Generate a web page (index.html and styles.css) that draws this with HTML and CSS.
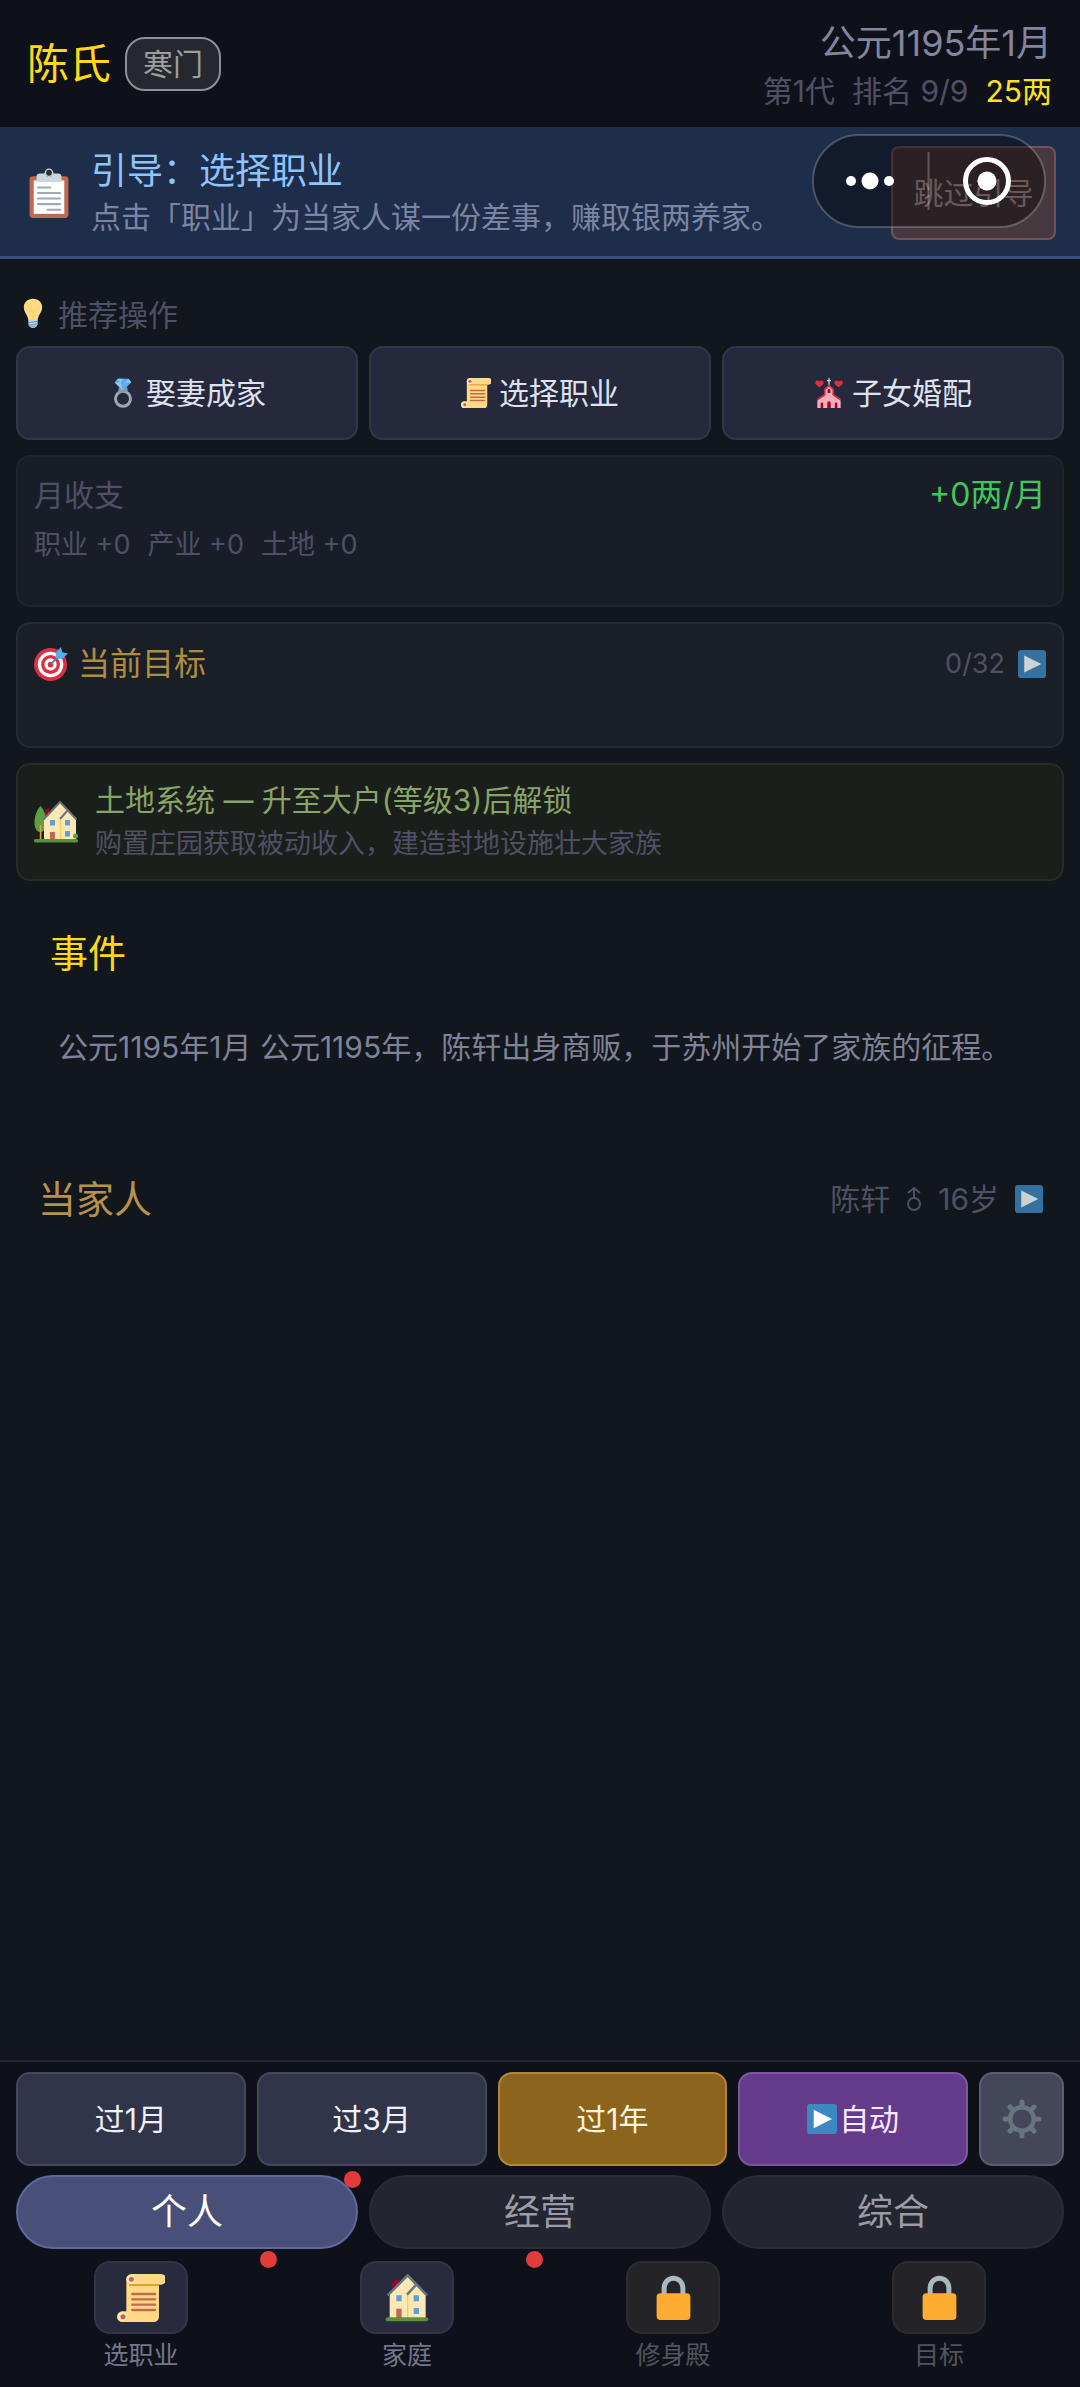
FILE: index.html
```html
<!DOCTYPE html>
<html lang="zh-CN">
<head>
<meta charset="utf-8">
<meta name="viewport" content="width=device-width, initial-scale=1">
<title>陈氏</title>
<link rel="stylesheet" href="styles.css">
</head>
<body>
<svg class="sprite" aria-hidden="true">
  <symbol id="i-clipboard" viewBox="0 0 36 36">
    <rect x="4" y="6" width="28" height="30" rx="2.500" fill="#c1694f"/>
    <rect x="7" y="9" width="22" height="24" fill="#fff"/>
    <path fill="#ccd6dd" d="M9 10V6.500a2.500 2.500 0 0 1 2.500-2.500H14.500a4 4 0 0 1 7 0h3a2.500 2.500 0 0 1 2.500 2.500V10z"/>
    <circle cx="18" cy="3.800" r="2.600" fill="#292f33"/><circle cx="18" cy="3.400" r="2.600" fill="none" stroke="#ccd6dd"/>
    <path stroke="#99aab5" stroke-width="1.500" stroke-linecap="round" d="M10 14h9M10 18h16M10 22h16M10 26h16M17 30h9"/>
  </symbol>
  <symbol id="i-bulb" viewBox="0 0 36 36">
    <path fill="#ffd983" d="M29 11.060C29 5.600 24.800 1 18 1S7 5.600 7 11.060C7 17.500 11.500 19 12.500 27h11C24.500 19 29 17.500 29 11.060z"/>
    <path fill="none" stroke="#ffcc4d" stroke-width="1.300" d="M14 13l4 4 4-4M18 17v9"/>
    <path fill="#ccd6dd" d="M12.500 26h11v5a5.500 5 0 0 1-11 0z"/>
    <path stroke="#5da5dc" stroke-width="1.400" d="M12.500 29.500l11-1.500M12.500 32.500l11-1.500"/>
    <path fill="#99aab5" d="M14 33h8l-2 2.500h-4z"/>
  </symbol>
  <symbol id="i-ring" viewBox="0 0 36 36">
    <circle cx="18" cy="25" r="9" fill="none" stroke="#99aab5" stroke-width="3.600"/>
    <path fill="#8899a6" d="M13 11h10l1 6H12z"/>
    <path fill="#5dadec" d="M11.500 1h13L28 5.500 18 15 8 5.500z"/>
    <path fill="#8ccaf7" d="M8 5.500h7L18 15zM11.500 1l3.500 4.500L18 1zM28 5.500h-7L24.500 1z"/>
  </symbol>
  <symbol id="i-scroll" viewBox="0 0 36 36">
    <path fill="#ffd983" d="M7 4a4 4 0 0 1 4-4h22a3.500 3.500 0 0 1 0 8h-1.500v24a4 4 0 0 1-4 4H4a4 4 0 0 1 0-8h3z"/>
    <path fill="#e39f3d" d="M9 7.500h22.500V9H9z"/>
    <circle cx="10.500" cy="4" r="3.500" fill="#ffe8b6"/><circle cx="10.800" cy="4" r="1.900" fill="#c1694f"/>
    <circle cx="4" cy="32" r="3.600" fill="#ffe8b6"/><circle cx="4.500" cy="32" r="1.900" fill="#c1694f"/>
    <path stroke="#c1694f" stroke-width="1.800" stroke-linecap="round" d="M11.500 15h17M11.500 19h17M11.500 23h17M11.500 27h17"/>
  </symbol>
  <symbol id="i-church" viewBox="0 0 36 36">
    <path stroke="#ccd6dd" stroke-width="1.500" d="M18 0v9M15.500 3h5"/>
    <path fill="#f4abba" d="M13 13l5-5 5 5v8l9 6v9H4v-9l9-6z"/>
    <path fill="none" stroke="#dd2e44" stroke-width="2" d="M4 26l9-6v-6l5-5 5 5v6l9 6"/>
    <path fill="#a0041e" d="M16.300 18v-3a1.700 1.700 0 0 1 3.400 0v3zM8 36v-5a1.500 1.500 0 0 1 3 0v5zM16 36v-6a2 2 0 0 1 4 0v6zM25 36v-5a1.500 1.500 0 0 1 3 0v5z"/>
    <path fill="#dd2e44" d="M6.500 11C4 9 1 7.500 1.500 5c.5-2.500 4-2.500 5-.5 1-2 4.500-2 5 .5.500 2.500-2.500 4-5 6zM29.500 11c-2.500-2-5.500-3.500-5-6 .5-2.500 4-2.500 5-.5 1-2 4.500-2 5 .5.500 2.500-2.500 4-5 6z"/>
  </symbol>
  <symbol id="i-target" viewBox="0 0 36 36">
    <circle cx="17.500" cy="18.500" r="17.500" fill="#dd2e44"/><circle cx="17.500" cy="18.500" r="13.500" fill="#fff"/>
    <circle cx="17.500" cy="18.500" r="10" fill="#dd2e44"/><circle cx="17.500" cy="18.500" r="6.500" fill="#fff"/>
    <circle cx="17.500" cy="18.500" r="3" fill="#dd2e44"/>
    <path stroke="#3b88c3" stroke-width="1.800" d="M17.500 18.500L30 6"/>
    <path fill="#55acee" d="M23 12V6l5.500-6 1.500 5.500L36 7l-6.500 6z"/>
  </symbol>
  <symbol id="i-house" viewBox="0 0 36 36">
    <path fill="#a0041e" d="M7 7l3-3 2 1v7l-5 4z"/>
    <path fill="#ffe8b6" d="M5 15L18 1l14 15v17H5z"/>
    <path fill="#ffcc4d" d="M18 15h1v18h-1z"/>
    <path fill="none" stroke="#66757f" stroke-width="1.900" d="M3.500 16L18.500 1 33 16M18 15.500L25 8"/>
    <path fill="#5d9fd6" d="M10 16h4v4.500h-4zM23 16h4v4.500h-4zM23 25.500h4V30h-4z"/>
    <path fill="#c1694f" d="M10 26h4v7h-4z"/>
    <rect x="2" y="32.500" width="32" height="3" rx="1.500" fill="#5c913b"/>
  </symbol>
  <symbol id="i-garden" viewBox="0 0 44 42">
    <path fill="#a0041e" d="M11 9l4-2v7l-4 3z"/>
    <path fill="#5da043" d="M6.500 5C10 9 12.500 15 12.500 21.500S10 31 6.500 31 .5 28 .5 21.500 3 9 6.500 5z"/><path fill="#e39f3d" d="M5.800 24h1.600v14H5.800z"/>
    <path fill="#ffe8b6" d="M10 17L26 1l16 17v20H10z"/>
    <path fill="#ffcc4d" d="M26 18h1v20h-1z"/>
    <path fill="none" stroke="#66757f" stroke-width="2" d="M9.500 18.500L26 1l16.500 17.500M26 18l8-9"/>
    <path fill="#5d9fd6" d="M16 19h5v5.500h-5zM31 19h5v5.500h-5zM31 30h5v5.500h-5z"/>
    <path fill="#c1694f" d="M16 31h5v7h-5z"/>
    <circle cx="41.500" cy="35" r="2.500" fill="#5da043"/>
    <rect y="38" width="44" height="3.500" rx="1.500" fill="#5c913b"/>
  </symbol>
  <symbol id="i-play" viewBox="0 0 36 36">
    <rect width="36" height="36" rx="4" fill="#3b88c3"/><path fill="#fff" d="M8 7l22 11L8 29z"/>
  </symbol>
  <symbol id="i-lock" viewBox="0 0 36 36">
    <path fill="none" stroke="#aab8c2" stroke-width="4" d="M10.500 18v-7.500a7.500 8 0 0 1 15 0V18"/>
    <rect x="4.500" y="14.500" width="27" height="21.500" rx="3" fill="#ffac33"/>
  </symbol>
  <symbol id="i-gear" viewBox="0 0 40 40">
    <g stroke="#66757f" stroke-width="5" stroke-linecap="round"><path d="M20 3v34M3 20h34M8 8l24 24M32 8L8 32"/></g>
    <circle cx="20" cy="20" r="14" fill="#66757f"/><circle cx="20" cy="20" r="9.500" fill="#44465a"/>
  </symbol>
</svg>

<div class="app">
  <header class="topbar">
    <div class="clan">
      <h1 class="clan-name">陈氏</h1>
      <span class="rank-badge">寒门</span>
    </div>
    <div class="status">
      <div class="date">公元1195年1月</div>
      <div class="stats"><span>第1代</span><span>排名 9/9</span><span class="money">25两</span></div>
    </div>
  </header>

  <section class="guide">
    <svg class="guide-icon"><use href="#i-clipboard"/></svg>
    <div class="guide-body">
      <h2 class="guide-title">引导：选择职业</h2>
      <p class="guide-text">点击「职业」为当家人谋一份差事，赚取银两养家。</p>
    </div>
    <button class="skip" type="button">跳过引导</button>
    <svg class="capsule" viewBox="0 0 234 94" aria-hidden="true">
      <rect x="1" y="1" width="232" height="92" rx="46" fill="#000" fill-opacity=".4" stroke="#fff" stroke-opacity=".22" stroke-width="2"/>
      <path d="M116.500 18v58" stroke="#fff" stroke-opacity=".25" stroke-width="2"/>
      <g fill="#fff"><circle cx="39" cy="47" r="5"/><circle cx="58" cy="47" r="8.500"/><circle cx="77" cy="47" r="5"/><circle cx="175" cy="47" r="9.500"/></g>
      <circle cx="175" cy="47" r="21.500" fill="none" stroke="#fff" stroke-width="5"/>
    </svg>
  </section>

  <main class="content">
    <section class="suggest">
      <h2 class="suggest-title"><svg class="em"><use href="#i-bulb"/></svg>推荐操作</h2>
      <div class="row">
        <button class="action" type="button"><svg class="em"><use href="#i-ring"/></svg>娶妻成家</button>
        <button class="action" type="button"><svg class="em"><use href="#i-scroll"/></svg>选择职业</button>
        <button class="action" type="button"><svg class="em"><use href="#i-church"/></svg>子女婚配</button>
      </div>
    </section>

    <section class="card income">
      <div class="line"><h2 class="income-title">月收支</h2><span class="net">+0两/月</span></div>
      <div class="detail"><span>职业 +0</span><span>产业 +0</span><span>土地 +0</span></div>
    </section>

    <section class="card goal">
      <div class="line">
        <h2 class="goal-title"><svg class="goal-icon"><use href="#i-target"/></svg>当前目标</h2>
        <span class="goal-count">0/32<svg class="play"><use href="#i-play"/></svg></span>
      </div>
    </section>

    <section class="card land">
      <svg class="land-icon"><use href="#i-garden"/></svg>
      <div>
        <h2 class="land-title">土地系统 — 升至大户(等级3)后解锁</h2>
        <p class="land-text">购置庄园获取被动收入，建造封地设施壮大家族</p>
      </div>
    </section>

    <section class="events">
      <h2 class="events-title">事件</h2>
      <p class="event">公元1195年1月 公元1195年，陈轩出身商贩，于苏州开始了家族的征程。</p>
    </section>

    <section class="line head">
      <h2 class="head-title">当家人</h2>
      <span class="head-info"><span>陈轩</span><svg class="male" viewBox="0 0 16 26" role="img" aria-label="男"><path d="M8 12V2M2 7l6-5 6 5"/><circle cx="8" cy="18" r="6"/></svg><span>16岁</span><svg class="play"><use href="#i-play"/></svg></span>
    </section>
  </main>

  <footer class="dock">
    <div class="row">
      <button class="step" type="button">过1月</button>
      <button class="step" type="button">过3月</button>
      <button class="step step-gold" type="button">过1年</button>
      <button class="step step-auto" type="button"><svg class="em"><use href="#i-play"/></svg>自动</button>
      <button class="settings" type="button" aria-label="设置"><svg class="gear"><use href="#i-gear"/></svg></button>
    </div>
    <div class="row tabs">
      <button class="tab tab-on" type="button">个人<i class="dot"></i></button>
      <button class="tab" type="button">经营</button>
      <button class="tab" type="button">综合</button>
    </div>
    <nav class="menu">
      <button class="entry" type="button"><span class="tile"><svg class="entry-icon"><use href="#i-scroll"/></svg></span>选职业<i class="dot"></i></button>
      <button class="entry" type="button"><span class="tile"><svg class="entry-icon"><use href="#i-house"/></svg></span>家庭<i class="dot"></i></button>
      <button class="entry locked" type="button"><span class="tile"><svg class="entry-icon"><use href="#i-lock"/></svg></span>修身殿</button>
      <button class="entry locked" type="button"><span class="tile"><svg class="entry-icon"><use href="#i-lock"/></svg></span>目标</button>
    </nav>
  </footer>
</div>
</body>
</html>
```
FILE: styles.css
```css
* { box-sizing: border-box; }
body {
  margin: 0;
  background: #12161d;
  color: #4e5165;
  font: 30px/44px Inter, "Noto Sans CJK SC", sans-serif;
}
h1, h2, p { margin: 0; font-weight: 400; }
button {
  margin: 0;
  padding: 0;
  border: 0;
  background: none;
  color: inherit;
  font: inherit;
  cursor: pointer;
}
svg { display: block; flex: none; }
.sprite { position: absolute; width: 0; height: 0; }
.app { display: flex; flex-direction: column; min-height: 100vh; }
.row { display: flex; gap: 11px; }
.line { display: flex; align-items: center; justify-content: space-between; }
.em { width: 30px; height: 32px; }

/* Top bar */
.topbar {
  display: flex;
  align-items: flex-start;
  justify-content: space-between;
  padding: 19px 28px 12px 27px;
  background: #0f111a;
  line-height: 48px;
}
.clan { display: flex; align-items: center; gap: 14px; padding-top: 18px; }
.clan-name { color: #ffd914; font-size: 42px; }
.rank-badge {
  padding: 0 16px;
  border: 2px solid #8f9095;
  border-radius: 20px;
  background: #26282f;
  color: #9d9ea0;
  line-height: 50px;
}
.status { text-align: right; }
.date { color: #83869d; font-size: 36px; }
.stats { display: flex; justify-content: flex-end; gap: 17px; }
.money { color: #fde020; }

/* Guide banner */
.guide {
  position: relative;
  display: flex;
  align-items: center;
  gap: 17px;
  padding: 19px 24px 16px;
  border-bottom: 3px solid #35507f;
  background: #1e2d49;
}
.guide-icon { width: 50px; height: 52px; }
.guide-body { flex: 1; padding-top: 2px; line-height: 46px; }
.guide-title { color: #8ec4fa; font-size: 36px; }
.guide-text { color: #7b85a3; }
.skip {
  width: 165px;
  height: 94px;
  border: 2px solid #70525a;
  border-radius: 8px;
  background: #48383f;
  color: #b09494;
}
.capsule { position: absolute; top: 7px; right: 34px; width: 234px; height: 94px; }

/* Main column */
.content {
  display: flex;
  flex: 1;
  flex-direction: column;
  gap: 15px;
  padding: 38px 16px 40px;
}
.suggest-title {
  display: flex;
  gap: 10px;
  margin: 0 0 13px 2px;
  font-size: 30px;
  line-height: 36px;
}
.action {
  display: flex;
  flex: 1;
  align-items: center;
  justify-content: center;
  gap: 8px;
  height: 94px;
  border: 2px solid #323648;
  border-radius: 14px;
  background: #25293b;
  color: #dfe1f0;
}
.card {
  padding: 16px;
  border: 2px solid #20242f;
  border-radius: 14px;
  background: #191d28;
}
.income { padding-bottom: 38px; }
.income-title { font-size: 30px; }
.net { color: #41c65a; font-size: 32px; }
.detail { display: flex; gap: 17px; margin-top: 6px; font-size: 27px; }
.goal { padding: 18px 16px 60px; border-color: #262a37; background: #1a1e26; }
.goal-title { display: flex; align-items: center; gap: 10px; color: #b08c42; font-size: 32px; }
.goal-icon { width: 34px; height: 34px; }
.goal-count { display: flex; align-items: center; gap: 13px; font-size: 27px; }
.play { width: 28px; height: 28px; opacity: .8; }
.land {
  display: flex;
  align-items: center;
  gap: 17px;
  padding: 14px 16px;
  border-color: #272d25;
  background: #1b1f1b;
  line-height: 43px;
}
.land-icon { width: 44px; height: 42px; }
.land-title { color: #88a468; font-size: 30px; }
.land-text { font-size: 27px; }

.events { padding: 32px 40px 0 34px; line-height: 50px; }
.events-title { color: #ffd914; font-size: 38px; }
.event { margin: 44px 0 0 8px; color: #7f8298; }
.head { margin-top: 87px; padding: 0 21px 0 22px; line-height: 50px; }
.head-title { color: #b8914a; font-size: 38px; }
.head-info { display: flex; align-items: center; gap: 16px; }
.male { width: 16px; height: 26px; fill: none; stroke: #4e5165; stroke-width: 2; }

/* Bottom dock */
.dock {
  padding: 10px 16px 17px;
  border-top: 2px solid #232630;
  background: #0f111a;
}
.step {
  display: flex;
  flex: 1;
  align-items: center;
  justify-content: center;
  gap: 2px;
  height: 94px;
  border: 2px solid #44485c;
  border-radius: 14px;
  background: #31354a;
  color: #f0f1f8;
}
.step-gold { border-color: #ad8838; background: #8c641d; color: #fff4dc; }
.step-auto { border-color: #7d589f; background: #653c8c; color: #fbe9ff; }
.step .em { height: 30px; }
.settings {
  display: flex;
  align-items: center;
  justify-content: center;
  width: 85px;
  border: 2px solid #5b5d70;
  border-radius: 14px;
  background: #44465a;
}
.gear { width: 40px; height: 40px; }
.tabs { margin-top: 9px; }
.tab {
  position: relative;
  flex: 1;
  height: 74px;
  border: 2px solid #2a2c38;
  border-radius: 37px;
  background: #232530;
  color: #9b9ca6;
  font-size: 36px;
}
.tab-on { border-color: #6068a0; background: #484f78; color: #fff; }
.dot {
  position: absolute;
  top: -6px;
  right: -5px;
  width: 17px;
  height: 17px;
  border-radius: 50%;
  background: #e03c3c;
}
.menu { display: flex; margin: 12px -8px 0; }
.entry {
  position: relative;
  display: flex;
  flex: 1;
  flex-direction: column;
  align-items: center;
  gap: 6px;
  color: #74778c;
  font-size: 25px;
  line-height: 30px;
}
.entry .dot { top: -10px; right: -3px; }
.tile {
  display: flex;
  align-items: center;
  justify-content: center;
  width: 94px;
  height: 73px;
  border: 2px solid #333547;
  border-radius: 16px;
  background: #282b3d;
}
.entry-icon { width: 48px; height: 48px; }
.locked { color: #53545e; }
.locked .tile { border-color: #2b2b31; background: #242428; }
.locked .entry-icon { width: 45px; height: 45px; }
```
